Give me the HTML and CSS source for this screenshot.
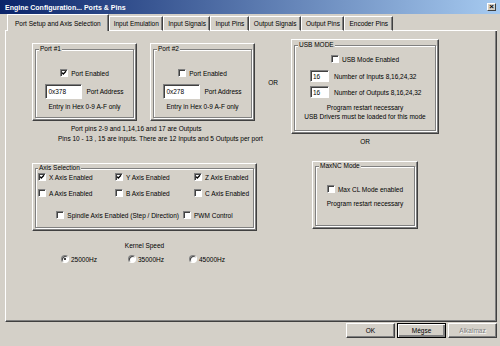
FILE: index.html
```html
<!DOCTYPE html>
<html lang="en">
<head>
  <meta charset="UTF-8" />
  <title>Engine Configuration... Ports &amp; Pins</title>
  <link rel="stylesheet" href="styles.css">
</head>
<body>

  <div class="window">

    <!-- Title bar -->
    <div class="titlebar">
      <span class="title">Engine Configuration... Ports &amp; Pins</span>
      <span class="close">&#215;</span>
    </div>

    <!-- Tabs -->
    <div class="tabs">
      <span class="tab-edge"></span>
      <span class="tab active">Port Setup and Axis Selection</span>
      <span class="tab">Input Emulation</span>
      <span class="tab">Input Signals</span>
      <span class="tab">Input Pins</span>
      <span class="tab">Output Signals</span>
      <span class="tab">Output Pins</span>
      <span class="tab">Encoder Pins</span>
      <span class="tab-fill"></span>
    </div>

    <!-- Tab page -->
    <div class="panel">
      <div class="col-left">

        <div class="ports">
          <div class="group port">
            <fieldset>
              <legend>Port #1</legend>
              <label class="check first">
                <span class="cb"><svg width="6" height="6" viewBox="0 0 6 6"><path d="M1 2.6L2.3 4L5 1.2"/></svg></span>
                Port Enabled
              </label>
              <div class="addr"><input class="field" value="0x378"><span>Port Address</span></div>
              <div class="hint">Entry in Hex 0-9 A-F only</div>
            </fieldset>
          </div>

          <div class="group port">
            <fieldset>
              <legend>Port #2</legend>
              <label class="check first"><span class="cb"></span>Port Enabled</label>
              <div class="addr"><input class="field" value="0x278"><span>Port Address</span></div>
              <div class="hint">Entry in Hex 0-9 A-F only</div>
            </fieldset>
          </div>

          <div class="or">OR</div>
        </div>

        <div class="info">
          <div class="line-one">Port pins 2-9 and 1,14,16 and 17 are Outputs</div>
          <div class="line-two">Pins 10 - 13 , 15 are inputs. There are 12 Inputs and 5 Outputs per port</div>
        </div>

        <div class="group axis">
          <fieldset>
            <legend>Axis Selection</legend>
            <div class="axis-grid">
              <label class="check"><span class="cb"><svg width="6" height="6" viewBox="0 0 6 6"><path d="M1 2.6L2.3 4L5 1.2"/></svg></span>X Axis Enabled</label>
              <label class="check"><span class="cb"><svg width="6" height="6" viewBox="0 0 6 6"><path d="M1 2.6L2.3 4L5 1.2"/></svg></span>Y Axis Enabled</label>
              <label class="check"><span class="cb"><svg width="6" height="6" viewBox="0 0 6 6"><path d="M1 2.6L2.3 4L5 1.2"/></svg></span>Z Axis Enabled</label>
              <label class="check"><span class="cb"></span>A Axis Enabled</label>
              <label class="check"><span class="cb"></span>B Axis Enabled</label>
              <label class="check"><span class="cb"></span>C Axis Enabled</label>
            </div>
            <div class="axis-extra">
              <label class="check"><span class="cb"></span>Spindle Axis Enabled (Step / Direction)</label>
              <label class="check"><span class="cb"></span>PWM Control</label>
            </div>
          </fieldset>
        </div>

        <div class="kernel">
          <div class="kernel-title">Kernel Speed</div>
          <div class="speeds">
            <label class="radio-item wide"><span class="rb on"></span>25000Hz</label>
            <label class="radio-item"><span class="rb"></span>35000Hz</label>
            <label class="radio-item"><span class="rb"></span>45000Hz</label>
          </div>
        </div>

      </div>

      <div class="col-right">
        <div class="group usb">
          <fieldset>
            <legend>USB MODE</legend>
            <label class="check first"><span class="cb"></span>USB Mode Enabled</label>
            <div class="count first-count"><input class="field small" value="16"><span>Number of Inputs 8,16,24,32</span></div>
            <div class="count"><input class="field small" value="16"><span>Number of Outputs 8,16,24,32</span></div>
            <div class="notes">
              <div>Program restart necessary</div>
              <div>USB Drivers must be loaded for this mode</div>
            </div>
          </fieldset>
        </div>

        <div class="or-below">OR</div>

        <div class="group maxnc">
          <fieldset>
            <legend>MaxNC Mode</legend>
            <label class="check first"><span class="cb"></span>Max CL Mode enabled</label>
            <div class="hint">Program restart necessary</div>
          </fieldset>
        </div>
      </div>
    </div>

    <!-- Dialog buttons -->
    <div class="buttons">
      <button class="btn">OK</button>
      <button class="btn default">Mégse</button>
      <button class="btn disabled">Alkalmaz</button>
    </div>

  </div>

</body>
</html>
```

FILE: styles.css
```css
body {
  margin: 0;
  font-family: "Liberation Sans", Arial, sans-serif;
  font-size: 6.5px;
  color: #000;
}

.window {
  width: 500px;
  height: 346px;
  background: #d4d0c8;
  overflow: hidden;
}

/* Title bar */
.titlebar {
  height: 14px;
  background: linear-gradient(to right, #0a246a, #a6caf0);
  display: flex;
  align-items: center;
  justify-content: space-between;
  padding: 0 4px 0 5px;
}

.title {
  color: #fff;
  font-weight: bold;
  font-size: 7px;
}

.close {
  width: 9px;
  height: 8px;
  box-sizing: border-box;
  background: #d4d0c8;
  border: 1px solid;
  border-color: #fff #404040 #404040 #fff;
  font-size: 8px;
  font-weight: bold;
  line-height: 6px;
  text-align: center;
}

/* Tabs */
.tabs {
  display: flex;
  align-items: flex-end;
  height: 17px;
  margin: 0 3px 0 5px;
}

.tab-edge {
  width: 2px;
  border-bottom: 1px solid #fff;
}

.tab-fill {
  flex: 1;
  border-bottom: 1px solid #fff;
}

.tab {
  height: 13px;
  line-height: 13px;
  padding: 0 3.5px 0 4px;
  border-top: 1px solid #fff;
  border-left: 1px solid #fff;
  border-right: 1px solid #404040;
  border-bottom: 1px solid #fff;
  box-shadow: inset -1px 0 #808080;
  white-space: nowrap;
}

.tab.active {
  height: 16px;
  line-height: 18px;
  padding: 0 7px;
  border-bottom: none;
}

/* Tab page */
.panel {
  height: 291px;
  margin: 0 3px 0 5px;
  box-sizing: border-box;
  border: 1px solid;
  border-top: none;
  border-color: #fff #404040 #404040 #fff;
  box-shadow: inset -1px -1px #808080;
  display: flex;
  padding-left: 26px;
}

.col-left {
  width: 259px;
  display: flex;
  flex-direction: column;
}

.col-right {
  width: 148px;
  display: flex;
  flex-direction: column;
  align-items: center;
}

/* Group boxes */
.group {
  box-sizing: border-box;
  border: 1px solid;
  border-color: #fff #404040 #404040 #fff;
  box-shadow: inset -1px -1px #808080;
  padding: 0 2px 2px 2px;
}

.group fieldset {
  margin: 0;
  padding: 0 3px;
  height: 100%;
  box-sizing: border-box;
  border: 1px solid #808080;
  box-shadow: 1px 1px #fff, inset 1px 1px #fff;
  display: flex;
  flex-direction: column;
  align-items: center;
  min-width: 0;
}

.group legend {
  padding: 0 1px;
  line-height: 8px;
  background: #d4d0c8;
}

.port,
.usb {
  padding-top: 1px;
}

/* Controls */
.check {
  display: flex;
  align-items: center;
  gap: 3px;
  height: 10px;
  white-space: nowrap;
}

.cb {
  width: 8px;
  height: 8px;
  box-sizing: border-box;
  background: #fff;
  border: 1px solid;
  border-color: #808080 #fff #fff #808080;
  box-shadow: inset 1px 1px #404040;
  display: flex;
  align-items: center;
  justify-content: center;
  flex: none;
}

.cb svg {
  fill: none;
  stroke: #000;
  stroke-width: 1.3;
}

.rb {
  width: 8px;
  height: 8px;
  box-sizing: border-box;
  border-radius: 50%;
  background: #fff;
  border: 1px solid;
  border-color: #808080 #fff #fff #808080;
  box-shadow: inset 1px 1px #404040;
  display: flex;
  align-items: center;
  justify-content: center;
  flex: none;
}

.rb.on::before {
  content: "";
  width: 2px;
  height: 2px;
  border-radius: 50%;
  background: #000;
}

.field {
  width: 37px;
  height: 15px;
  box-sizing: border-box;
  border: 1px solid;
  border-color: #808080 #fff #fff #808080;
  box-shadow: inset 1px 1px #404040;
  background: #fff;
  font: inherit;
  padding: 0 2px;
  margin: 0;
}

.field.small {
  width: 19px;
  height: 12px;
}

/* Port boxes */
.ports {
  display: flex;
  align-items: center;
  margin-top: 12px;
}

.port {
  width: 105px;
  height: 78px;
}

.port + .port {
  margin-left: 13px;
}

.port .first {
  margin-top: 15px;
}

.addr {
  display: flex;
  align-items: center;
  gap: 4px;
  margin-top: 6px;
}

.hint {
  line-height: 8px;
  margin-top: 4px;
  white-space: nowrap;
}

.or {
  flex: 1;
  text-align: center;
}

.info {
  margin-top: 3px;
  line-height: 10px;
  white-space: nowrap;
}

.line-one {
  padding-left: 39px;
}

.line-two {
  padding-left: 26px;
}

/* Axis selection */
.axis {
  width: 225px;
  height: 68px;
  margin-top: 19px;
}

.axis fieldset {
  padding: 0 2px;
  align-items: stretch;
}

.axis-grid {
  display: grid;
  grid-template-columns: 77px 79px auto;
  row-gap: 6px;
}

.axis-extra {
  display: flex;
  justify-content: center;
  gap: 4px;
  margin-top: 12px;
}

/* Kernel speed */
.kernel {
  width: 225px;
  margin-top: 11px;
}

.kernel-title {
  text-align: center;
  line-height: 8px;
}

.speeds {
  display: flex;
  margin-top: 4px;
  padding-left: 29px;
}

.radio-item {
  display: flex;
  align-items: center;
  gap: 2px;
  height: 10px;
  width: 61px;
}

.radio-item.wide {
  width: 67px;
}

/* USB mode */
.usb {
  width: 148px;
  height: 95px;
  margin-top: 8px;
}

.usb .first {
  margin-top: 5px;
}

.count {
  display: flex;
  align-items: center;
  gap: 5px;
  align-self: flex-start;
  margin-left: 12px;
  margin-top: 4px;
  white-space: nowrap;
}

.count.first-count {
  margin-top: 6px;
}

.notes {
  margin-top: 5px;
  line-height: 9px;
  text-align: center;
  white-space: nowrap;
}

.or-below {
  margin-top: 3px;
  line-height: 10px;
}

/* MaxNC */
.maxnc {
  width: 106px;
  height: 68px;
  margin-top: 14px;
}

.maxnc .first {
  margin-top: 14px;
}

.maxnc .hint {
  margin-top: 6px;
}

/* Dialog buttons */
.buttons {
  display: flex;
  justify-content: flex-end;
  gap: 2px;
  margin-top: 1px;
  padding-right: 3px;
}

.btn {
  width: 49px;
  height: 15px;
  box-sizing: border-box;
  background: #d4d0c8;
  border: 1px solid;
  border-color: #fff #404040 #404040 #fff;
  box-shadow: inset -1px -1px #808080;
  font: inherit;
  color: #000;
  padding: 0;
}

.btn.default {
  border-color: #000;
  box-shadow: inset 1px 1px #fff, inset -2px -2px #808080;
}

.btn.disabled {
  color: #808080;
  text-shadow: 1px 1px #fff;
}
```
